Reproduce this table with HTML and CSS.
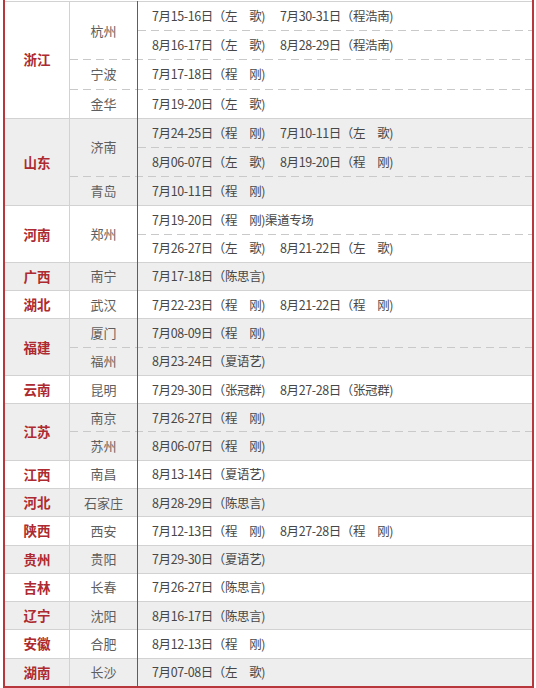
FILE: index.html
```html
<!DOCTYPE html>
<html lang="zh-CN">
<head>
<meta charset="utf-8">
<title>巡讲安排</title>
<link rel="stylesheet" href="styles.css">
</head>
<body>
<div class="table">
  <div class="prov tall">
    <div class="pname">浙江</div>
    <div class="cities">
      <div class="city">
        <div class="cname">杭州</div>
        <div class="dates">
          <div class="line"><span class="e">7月15-16日（左　歌)</span><span class="e">7月30-31日（程浩南)</span></div>
          <div class="line"><span class="e">8月16-17日（左　歌)</span><span class="e">8月28-29日（程浩南)</span></div>
        </div>
      </div>
      <div class="city">
        <div class="cname">宁波</div>
        <div class="dates"><div class="line"><span class="e">7月17-18日（程　刚)</span></div></div>
      </div>
      <div class="city">
        <div class="cname">金华</div>
        <div class="dates"><div class="line"><span class="e">7月19-20日（左　歌)</span></div></div>
      </div>
    </div>
  </div>

  <div class="prov tall alt">
    <div class="pname">山东</div>
    <div class="cities">
      <div class="city">
        <div class="cname">济南</div>
        <div class="dates">
          <div class="line"><span class="e">7月24-25日（程　刚)</span><span class="e">7月10-11日（左　歌)</span></div>
          <div class="line"><span class="e">8月06-07日（左　歌)</span><span class="e">8月19-20日（程　刚)</span></div>
        </div>
      </div>
      <div class="city">
        <div class="cname">青岛</div>
        <div class="dates"><div class="line"><span class="e">7月10-11日（程　刚)</span></div></div>
      </div>
    </div>
  </div>

  <div class="prov">
    <div class="pname">河南</div>
    <div class="cities">
      <div class="city">
        <div class="cname">郑州</div>
        <div class="dates">
          <div class="line"><span class="e">7月19-20日（程　刚)渠道专场</span></div>
          <div class="line"><span class="e">7月26-27日（左　歌)</span><span class="e">8月21-22日（左　歌)</span></div>
        </div>
      </div>
    </div>
  </div>

  <div class="prov alt">
    <div class="pname">广西</div>
    <div class="cities">
      <div class="city">
        <div class="cname">南宁</div>
        <div class="dates"><div class="line"><span class="e">7月17-18日（陈思言)</span></div></div>
      </div>
    </div>
  </div>

  <div class="prov">
    <div class="pname">湖北</div>
    <div class="cities">
      <div class="city">
        <div class="cname">武汉</div>
        <div class="dates"><div class="line"><span class="e">7月22-23日（程　刚)</span><span class="e">8月21-22日（程　刚)</span></div></div>
      </div>
    </div>
  </div>

  <div class="prov alt">
    <div class="pname">福建</div>
    <div class="cities">
      <div class="city">
        <div class="cname">厦门</div>
        <div class="dates"><div class="line"><span class="e">7月08-09日（程　刚)</span></div></div>
      </div>
      <div class="city">
        <div class="cname">福州</div>
        <div class="dates"><div class="line"><span class="e">8月23-24日（夏语艺)</span></div></div>
      </div>
    </div>
  </div>

  <div class="prov">
    <div class="pname">云南</div>
    <div class="cities">
      <div class="city">
        <div class="cname">昆明</div>
        <div class="dates"><div class="line"><span class="e">7月29-30日（张冠群)</span><span class="e">8月27-28日（张冠群)</span></div></div>
      </div>
    </div>
  </div>

  <div class="prov alt">
    <div class="pname">江苏</div>
    <div class="cities">
      <div class="city">
        <div class="cname">南京</div>
        <div class="dates"><div class="line"><span class="e">7月26-27日（程　刚)</span></div></div>
      </div>
      <div class="city">
        <div class="cname">苏州</div>
        <div class="dates"><div class="line"><span class="e">8月06-07日（程　刚)</span></div></div>
      </div>
    </div>
  </div>

  <div class="prov">
    <div class="pname">江西</div>
    <div class="cities">
      <div class="city">
        <div class="cname">南昌</div>
        <div class="dates"><div class="line"><span class="e">8月13-14日（夏语艺)</span></div></div>
      </div>
    </div>
  </div>

  <div class="prov alt">
    <div class="pname">河北</div>
    <div class="cities">
      <div class="city">
        <div class="cname">石家庄</div>
        <div class="dates"><div class="line"><span class="e">8月28-29日（陈思言)</span></div></div>
      </div>
    </div>
  </div>

  <div class="prov">
    <div class="pname">陕西</div>
    <div class="cities">
      <div class="city">
        <div class="cname">西安</div>
        <div class="dates"><div class="line"><span class="e">7月12-13日（程　刚)</span><span class="e">8月27-28日（程　刚)</span></div></div>
      </div>
    </div>
  </div>

  <div class="prov alt">
    <div class="pname">贵州</div>
    <div class="cities">
      <div class="city">
        <div class="cname">贵阳</div>
        <div class="dates"><div class="line"><span class="e">7月29-30日（夏语艺)</span></div></div>
      </div>
    </div>
  </div>

  <div class="prov">
    <div class="pname">吉林</div>
    <div class="cities">
      <div class="city">
        <div class="cname">长春</div>
        <div class="dates"><div class="line"><span class="e">7月26-27日（陈思言)</span></div></div>
      </div>
    </div>
  </div>

  <div class="prov alt">
    <div class="pname">辽宁</div>
    <div class="cities">
      <div class="city">
        <div class="cname">沈阳</div>
        <div class="dates"><div class="line"><span class="e">8月16-17日（陈思言)</span></div></div>
      </div>
    </div>
  </div>

  <div class="prov">
    <div class="pname">安徽</div>
    <div class="cities">
      <div class="city">
        <div class="cname">合肥</div>
        <div class="dates"><div class="line"><span class="e">8月12-13日（程　刚)</span></div></div>
      </div>
    </div>
  </div>

  <div class="prov alt">
    <div class="pname">湖南</div>
    <div class="cities">
      <div class="city">
        <div class="cname">长沙</div>
        <div class="dates"><div class="line"><span class="e">7月07-08日（左　歌)</span></div></div>
      </div>
    </div>
  </div>
</div>
</body>
</html>
```
FILE: styles.css
```css
* {
  box-sizing: border-box;
}

html, body {
  margin: 0;
  padding: 0;
  background: #ffffff;
}

body {
  font-family: "Noto Sans CJK SC", "Noto Sans", sans-serif;
  height: 688px;
  overflow: hidden;
}

.table {
  margin: 0 2px 0 3px;
  border: 2px solid #b7373d;
  border-top: 0;
  padding-top: 1px;
}

.prov {
  display: flex;
  box-shadow: inset 0 1px 0 #d2d2d2;
}

.prov.alt {
  background: #eeeeee;
}

.pname {
  width: 64px;
  flex: none;
  display: flex;
  align-items: center;
  justify-content: center;
  color: #ad2a30;
  font-weight: 700;
  font-size: 13.5px;
}

.cities {
  flex: 1;
  display: flex;
  flex-direction: column;
  border-left: 1px solid #d2d2d2;
}

.city {
  display: flex;
}

.city + .city,
.line + .line {
  background-image: linear-gradient(to right, #c9c9c9 8px, transparent 8px);
  background-size: 13px 1px;
  background-repeat: repeat-x;
  background-position: 0 0;
}

.cname {
  width: 67px;
  flex: none;
  display: flex;
  align-items: center;
  justify-content: center;
  color: #5e5e5e;
  font-size: 13px;
}

.dates {
  flex: 1;
  border-left: 1px solid #b7373d;
}

.line {
  height: 28.27px;
  display: flex;
  align-items: center;
  padding-left: 14px;
  font-size: 12.5px;
  letter-spacing: -0.4px;
  color: #474747;
  white-space: nowrap;
}

.tall .line {
  height: 29.2px;
}

.e {
  display: inline-block;
  min-width: 128px;
}
```
